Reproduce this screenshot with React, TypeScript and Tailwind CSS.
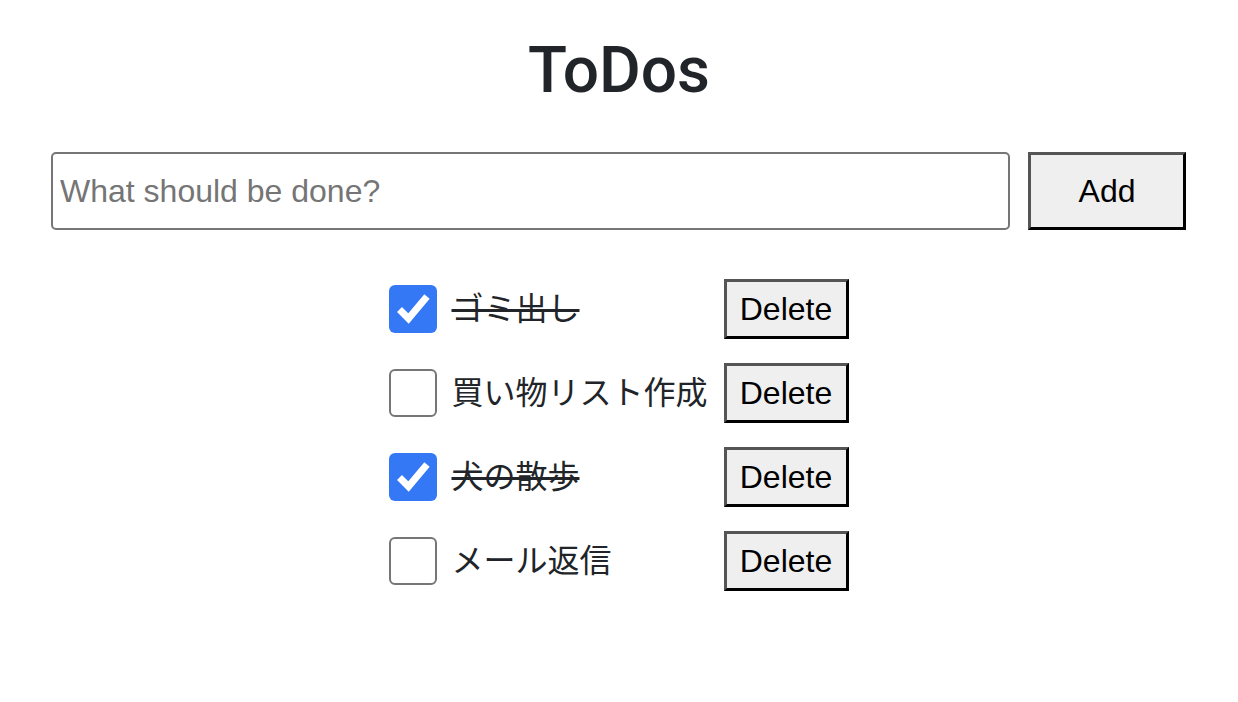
import React from "react";

type Todo = { text: string; done: boolean };

const todos: Todo[] = [
  { text: "ゴミ出し", done: true },
  { text: "買い物リスト作成", done: false },
  { text: "犬の散歩", done: true },
  { text: "メール返信", done: false },
];

function Check({ done }: { done: boolean }) {
  if (done) {
    return (
      <div className="w-[48px] h-[48px] rounded-[6px] bg-[#3478f6] flex items-center justify-center">
        <svg width="48" height="48" viewBox="0 0 48 48">
          <path d="M10.5 24.5 L19.5 33.5 L38 11.5" fill="none" stroke="#ffffff" strokeWidth="7" strokeLinecap="butt" strokeLinejoin="miter" />
        </svg>
      </div>
    );
  }
  return <div className="w-[48px] h-[48px] rounded-[6px] border-2 border-[#767676] bg-white" />;
}

export default function App() {
  return (
    <div className="min-h-[702px] bg-white font-['Liberation_Sans','Noto_Sans_CJK_JP',sans-serif]">
      <h1 className="pt-[39px] text-center text-[64px] leading-none text-[#212529] font-medium font-['Roboto','Liberation_Sans',sans-serif]">ToDos</h1>
      <div className="mt-[49px] px-[51px] pr-[52px] flex gap-[18px]">
        <input
          className="flex-1 h-[78px] border-2 border-[#767676] rounded-[5px] px-[7px] text-[32px] text-black placeholder:text-[#757575] outline-none"
          placeholder="What should be done?"
        />
        <button className="w-[158px] h-[78px] bg-[#efefef] border-[3px] border-t-[#555555] border-l-[#555555] border-r-black border-b-black text-[32px] text-black">
          Add
        </button>
      </div>
      <div className="mt-[49px] flex justify-center">
        <div className="grid grid-cols-[48px_auto_auto] gap-y-[24px] items-center">
          {todos.map((t, i) => (
            <React.Fragment key={i}>
              <Check done={t.done} />
              <span
                className={`ml-[14px] mr-[16px] text-[32px] leading-none text-[#212529] ${t.done ? "line-through decoration-[#212529] decoration-[3px]" : ""}`}
              >
                {t.text}
              </span>
              <button className="w-[125px] h-[60px] bg-[#efefef] border-[3px] border-t-[#555555] border-l-[#555555] border-r-black border-b-black text-[32px] text-black">
                Delete
              </button>
            </React.Fragment>
          ))}
        </div>
      </div>
    </div>
  );
}
